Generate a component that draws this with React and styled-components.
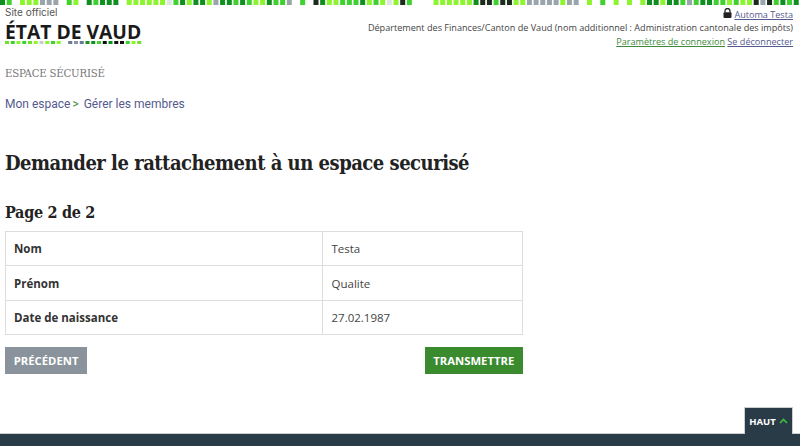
import React from "react";
import styled, { createGlobalStyle } from "styled-components";

const Global = createGlobalStyle`
  html, body { margin: 0; padding: 0; background: #fff; }
  body { font-family: "Open Sans", "Liberation Sans", sans-serif; color: #333; overflow: hidden; }
`;

const Page = styled.div`
  position: relative;
  width: 800px;
  height: 446px;
  display: flex;
  flex-direction: column;
  overflow: hidden;
`;

const Stripe = styled.svg`
  display: block;
  flex: none;
`;

const Header = styled.header`
  display: flex;
  justify-content: space-between;
  padding: 0 7px 0 5px;
`;

const Logo = styled.div`
  display: flex;
  flex-direction: column;
`;

const Official = styled.div`
  font: 400 10px/14px Inter, sans-serif;
  color: #555;
`;

const LogoName = styled.div`
  font: 700 19.3px/19px "Open Sans", sans-serif;
  color: #1a1a1a;
  margin-top: 3px;
`;

const Account = styled.div`
  text-align: right;
  font-size: 9.1px;
  line-height: 13.5px;
  padding-top: 2.5px;
  color: #444;
`;

const Link = styled.a`
  color: ${p => p.$green ? "#3c8a3c" : "#555a8e"};
  text-decoration: underline;
`;

const Main = styled.main`
  flex: 1;
  padding: 0 5px;
`;

const Space = styled.div`
  font: 400 11.3px/16px "DejaVu Serif", "Liberation Serif", serif;
  font-stretch: condensed;
  color: #777;
  margin-top: 18px;
  letter-spacing: -0.2px;
`;

const Crumbs = styled.nav`
  display: flex;
  font: 400 12px/16px Roboto, sans-serif;
  color: #555a8e;
  margin-top: 14px;
`;

const Sep = styled.span`
  color: #3c8a3c;
  margin: 0 5px 0 2px;
`;

const Title = styled.h1`
  font: 700 20px/26px "DejaVu Serif", serif;
  font-stretch: condensed;
  color: #222;
  margin: 38px 0 0;
  letter-spacing: -0.5px;
`;

const SubTitle = styled.h2`
  font: 700 16px/22px "DejaVu Serif", serif;
  font-stretch: condensed;
  color: #222;
  margin: 26px 0 7px;
  letter-spacing: -0.3px;
`;

const Table = styled.table`
  width: 518px;
  border-collapse: collapse;
  font-size: 11.5px;
`;

const Row = styled.tr`
  height: 34.4px;
`;

const Label = styled.th`
  width: 300px;
  border: 1px solid #ddd;
  padding: 0 8px;
  text-align: left;
  font-weight: 700;
  color: #333;
`;

const Value = styled.td`
  border: 1px solid #ddd;
  padding: 0 8.5px;
  color: #444;
`;

const Actions = styled.div`
  width: 518px;
  display: flex;
  justify-content: space-between;
  margin-top: 12px;
`;

const Button = styled.button`
  height: 27px;
  border: 0;
  padding: 0 8.7px;
  background: ${p => p.$primary ? "#3a8a2e" : "#8a939b"};
  color: #fff;
  font: 700 11.3px "Open Sans", sans-serif;
`;

const Footer = styled.footer`
  height: 13px;
  flex: none;
  box-sizing: border-box;
  border-top: 1px solid #c9ced1;
  background: #293b47;
`;

const TopLink = styled.a`
  position: absolute;
  right: 7px;
  bottom: 12px;
  height: 27px;
  width: 49px;
  box-sizing: border-box;
  border: 1px solid #c9ced1;
  border-bottom: 0;
  background: #293b47;
  color: #fff;
  font-size: 9.5px;
  font-weight: 700;
  display: flex;
  align-items: center;
  justify-content: center;
  gap: 3px;
`;

const palette = {
  g: "#3ed12f",
  l: "#8cf52e",
  d: "#0f8f1f",
  k: "#1c2b1c",
  s: "#9aa5ab",
  p: "#dfe6e0",
  ".": "#ffffff",
};

// read off the reference, one letter per square
const topPattern =
  "dg.lllsss.gl.dgddd.l" +
  "lllllpgdlddlsddgdgll" +
  "dggs.g.kdllgggdlglpl" +
  "kg...lllllldkkgkklls" +
  "sssslss.l.g.l.l.lddl" +
  "ddgsgddgglgllkskgdgd";

const logoColors = ["#6fe02c", "#3ed12f", "#8cf52e", "#3ed12f", "#6fe02c", "#8cf52e", "#c8ccd0", "#8cf52e", "#3ed12f", "#8cf52e", "#fff", "#6b7a90", "#8a93a8", "#6b7a90", "#1f8f1f", "#0f8f1f", "#3ed12f", "#111", "#0f8f1f", "#111", "#111", "#3ed12f", "#8cf52e", "#6fe02c"];

function TopStripe() {
  return (
    <Stripe width="800" height="5">
      {topPattern.split("").map((c, i) => (
        <rect key={i} x={i * 6.67} y="0" width="5" height="5" fill={palette[c]} />
      ))}
    </Stripe>
  );
}

function LogoStripe() {
  return (
    <Stripe width="137" height="3">
      {logoColors.map((c, i) => (
        <rect key={i} x={i * 5.75} y="0" width="4" height="3" fill={c} />
      ))}
    </Stripe>
  );
}

export default function App() {
  return (
    <Page>
      <Global />
      <TopStripe />
      <Header>
        <Logo>
          <Official>Site officiel</Official>
          <LogoName>ÉTAT DE VAUD</LogoName>
          <LogoStripe />
        </Logo>
        <Account>
          <div>
            <svg width="9" height="10" viewBox="0 0 9 10"><path d="M2 4.5V3a2.5 2.5 0 0 1 5 0v1.5" fill="none" stroke="#222" strokeWidth="1.3" /><rect x="0.5" y="4.2" width="8" height="5.8" rx="1" fill="#222" /></svg>{" "}
            <Link>Automa Testa</Link>
          </div>
          <div>Département des Finances/Canton de Vaud (nom additionnel : Administration cantonale des impôts)</div>
          <div><Link $green>Paramètres de connexion</Link> <Link>Se déconnecter</Link></div>
        </Account>
      </Header>
      <Main>
        <Space>ESPACE SÉCURISÉ</Space>
        <Crumbs>Mon espace<Sep>&gt;</Sep>Gérer les membres</Crumbs>
        <Title>Demander le rattachement à un espace securisé</Title>
        <SubTitle>Page 2 de 2</SubTitle>
        <Table>
          <tbody>
            <Row><Label>Nom</Label><Value>Testa</Value></Row>
            <Row><Label>Prénom</Label><Value>Qualite</Value></Row>
            <Row><Label>Date de naissance</Label><Value>27.02.1987</Value></Row>
          </tbody>
        </Table>
        <Actions>
          <Button>PRÉCÉDENT</Button>
          <Button $primary>TRANSMETTRE</Button>
        </Actions>
      </Main>
      <Footer />
      <TopLink>
        HAUT
        <svg width="9" height="6" viewBox="0 0 9 6"><path d="M1 5l3.5-3.5L8 5" fill="none" stroke="#3fbf3f" strokeWidth="1.6" /></svg>
      </TopLink>
    </Page>
  );
}
